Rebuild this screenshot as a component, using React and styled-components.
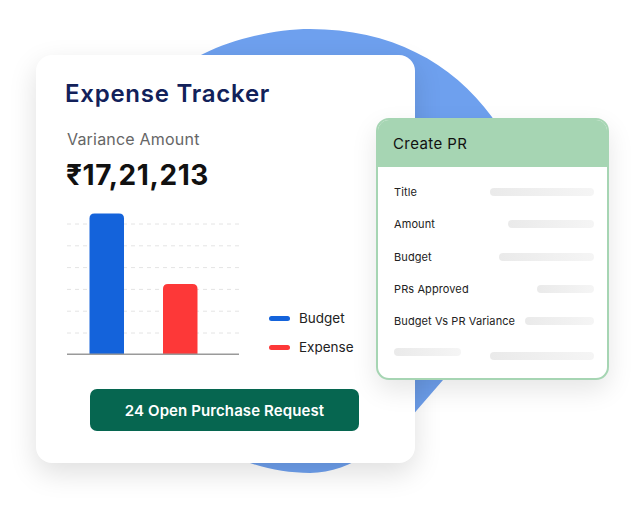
import React from "react";
import styled, { createGlobalStyle } from "styled-components";

const GlobalStyle = createGlobalStyle`
  body {
    margin: 0;
    background: #ffffff;
    font-family: Inter, "Noto Sans", sans-serif;
  }
`;

const Stage = styled.div`
  position: relative;
  width: 631px;
  height: 510px;
  overflow: hidden;
  box-sizing: border-box;
  padding: 55px 0 0 36px;
`;

const Blob = styled.svg`
  position: absolute;
  top: 0;
  left: 0;
  z-index: 0;
`;

const ExpenseCard = styled.section`
  position: relative;
  z-index: 1;
  width: 379px;
  height: 408px;
  box-sizing: border-box;
  padding: 25px 30px 0 29px;
  background: #ffffff;
  border-radius: 16px;
  box-shadow: 0 10px 28px rgba(0, 0, 0, 0.13);
  display: flex;
  flex-direction: column;
`;

const Title = styled.h1`
  margin: 0;
  font-size: 24px;
  line-height: 28px;
  font-weight: 600;
  color: #12215a;
  letter-spacing: 0.75px;
`;

const Label = styled.div`
  margin: 21px 0 0 2px;
  font-size: 16px;
  line-height: 20px;
  color: #666666;
  letter-spacing: 0.2px;
`;

const Amount = styled.div`
  margin: 9px 0 0 1px;
  font-size: 28px;
  line-height: 34px;
  font-weight: 700;
  color: #111111;
  letter-spacing: 0.6px;
`;

const ChartRow = styled.div`
  display: flex;
  align-items: flex-end;
  gap: 30px;
  margin: 21px 0 0 2px;
`;

const Legend = styled.ul`
  list-style: none;
  margin: 0;
  padding: 0;
  display: flex;
  flex-direction: column;
  gap: 13px;
`;

const LegendItem = styled.li`
  display: flex;
  align-items: center;
  gap: 9px;
  font-size: 13.5px;
  line-height: 16px;
  color: #222222;

  &::before {
    content: "";
    width: 21px;
    height: 5px;
    border-radius: 3px;
    background: ${(p) => p.$color};
  }
`;

const OpenButton = styled.button`
  align-self: center;
  margin: 34px 0 0 -1px;
  width: 269px;
  height: 42px;
  border: none;
  border-radius: 7px;
  background: #066650;
  color: #ffffff;
  font-family: inherit;
  font-size: 15px;
  font-weight: 600;
  letter-spacing: 0.1px;
`;

const PrCard = styled.aside`
  position: absolute;
  z-index: 2;
  left: 376px;
  top: 118px;
  width: 233px;
  height: 262px;
  box-sizing: border-box;
  border: 2px solid #a6d5b3;
  border-radius: 13px;
  background: #ffffff;
  overflow: hidden;
  box-shadow: 0 10px 26px rgba(0, 0, 0, 0.1);
`;

const PrHeader = styled.header`
  height: 47px;
  display: flex;
  align-items: center;
  padding-left: 15px;
  background: #a6d5b3;
  font-size: 15px;
  letter-spacing: 0.4px;
  color: #111111;
`;

const PrBody = styled.div`
  padding: 9px 13px 0 16px;
  display: flex;
  flex-direction: column;
`;

const PrRow = styled.div`
  height: 32.3px;
  display: flex;
  align-items: center;
  justify-content: space-between;
  font-size: 11px;
  letter-spacing: 0.1px;
  color: #222222;
`;

const Skeleton = styled.span`
  display: block;
  width: ${(p) => p.$w}px;
  height: 8px;
  border-radius: 4px;
  margin-top: ${(p) => p.$dy || 0}px;
  background: linear-gradient(90deg, #eaeaea, #f5f5f5);
`;

const gridLines = [11, 32.8, 54.6, 76.4, 98.2, 120];

const bars = [
  { x: 22.5, top: 0.5, color: "#1463db" },
  { x: 96, top: 71, color: "#fd3838" },
];

const barPath = (x, top, w, base, r) =>
  `M${x} ${base} V${top + r} Q${x} ${top} ${x + r} ${top} H${x + w - r} Q${x + w} ${top} ${x + w} ${top + r} V${base} Z`;

const BarChart = () => (
  <svg width="172" height="142" viewBox="0 0 172 142">
    {gridLines.map((y) => (
      <line
        key={y}
        x1="0"
        x2="172"
        y1={y}
        y2={y}
        stroke="#e4e4e4"
        strokeWidth="1"
        strokeDasharray="4 4"
      />
    ))}
    {bars.map((b) => (
      <path key={b.x} d={barPath(b.x, b.top, 34.5, 141.3, 5)} fill={b.color} />
    ))}
    <line x1="0" x2="172" y1="141.3" y2="141.3" stroke="#9a9a9a" strokeWidth="1.5" />
  </svg>
);

const prFields = [
  { label: "Title", w: 104 },
  { label: "Amount", w: 86 },
  { label: "Budget", w: 95 },
  { label: "PRs Approved", w: 57 },
  { label: "Budget Vs PR Variance", w: 69 },
];

const App = () => {
  return (
    <>
      <GlobalStyle />
      <Stage>
        <Blob width="631" height="510" viewBox="0 0 631 510">
          <path
            d="M310 29 C390 29 452 62 492 117 C530 175 520 310 443 380 L417 410 C392 440 352 473 310 473 C230 473 150 420 120 330 C95 250 110 150 170 80 C190 50 260 29 310 29 Z"
            fill="#6ea0ee"
          />
        </Blob>

        <ExpenseCard>
          <Title>Expense Tracker</Title>
          <Label>Variance Amount</Label>
          <Amount>₹17,21,213</Amount>
          <ChartRow>
            <BarChart />
            <Legend>
              <LegendItem $color="#1463db">Budget</LegendItem>
              <LegendItem $color="#fd3838">Expense</LegendItem>
            </Legend>
          </ChartRow>
          <OpenButton>24 Open Purchase Request</OpenButton>
        </ExpenseCard>

        <PrCard>
          <PrHeader>Create PR</PrHeader>
          <PrBody>
            {prFields.map((f) => (
              <PrRow key={f.label}>
                <span>{f.label}</span>
                <Skeleton $w={f.w} />
              </PrRow>
            ))}
            <PrRow>
              <Skeleton $w={67} $dy={-3} />
              <Skeleton $w={104} $dy={4} />
            </PrRow>
          </PrBody>
        </PrCard>
      </Stage>
    </>
  );
};

export default App;
